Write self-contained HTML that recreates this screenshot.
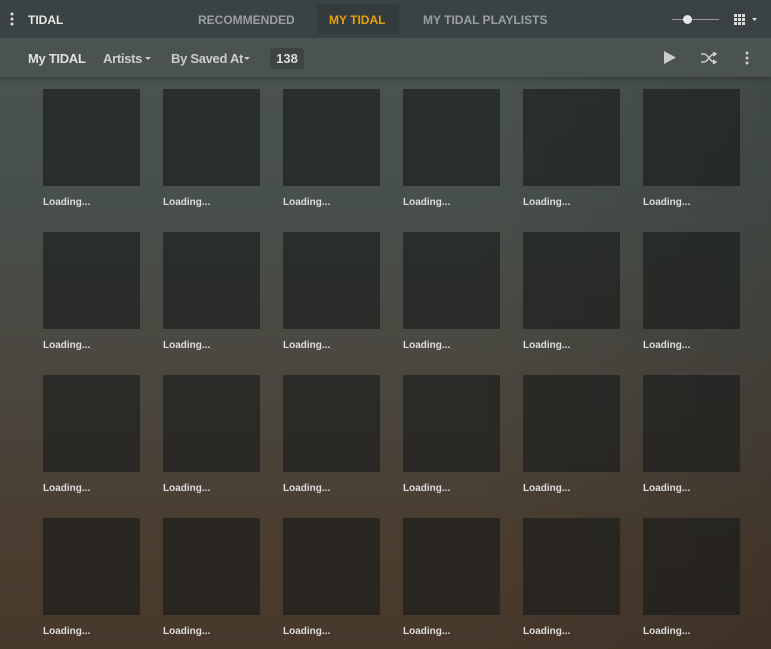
<!DOCTYPE html>
<html><head><style>
body{margin:0;width:771px;height:649px;overflow:hidden;font-family:"Liberation Sans",sans-serif;
background:linear-gradient(180deg,#4b5554 0%,#48504c 30%,#4a463e 60%,#4a3c2f 85%,#46382b 100%);position:relative}
.ov{position:absolute;inset:0;background:linear-gradient(90deg,rgba(0,0,0,0) 60%,rgba(0,0,0,.12) 100%)}
.hdr{position:absolute;left:0;top:0;width:771px;height:38px;background:#3a4243}
.tb{position:absolute;left:0;top:38px;width:771px;height:39px;background:#4a5351;box-shadow:0 2px 4px rgba(0,0,0,.25)}
.t{position:absolute;font-weight:bold;font-size:12px;color:#9aa0a0}
.w{color:#e8e8e8}
.tile{position:absolute;width:97px;height:97px;background:rgba(22,26,26,.62);}
.lb{position:absolute;font-size:10px;font-weight:bold;color:#ddd}
.m{position:absolute;top:51px;font-size:13px;font-weight:bold;letter-spacing:-0.3px}
</style></head><body>
<div class="ov"></div>
<div class="hdr"></div>
<div style="position:absolute;left:317px;top:4px;width:82px;height:30px;background:#333b3c"></div>
<svg style="position:absolute;left:10px;top:12px" width="4" height="14"><circle cx="2" cy="2" r="1.5" fill="#ddd"/><circle cx="2" cy="7" r="1.5" fill="#ddd"/><circle cx="2" cy="12" r="1.5" fill="#ddd"/></svg>
<div class="t w" style="left:28px;top:13px">TIDAL</div>
<div class="t" style="left:198px;top:13px">RECOMMENDED</div>
<div class="t" style="left:329px;top:13px;color:#e5a00d">MY TIDAL</div>
<div class="t" style="left:423px;top:13px">MY TIDAL PLAYLISTS</div>
<div style="position:absolute;left:672px;top:19px;width:47px;height:1px;background:#999"></div>
<div style="position:absolute;left:683px;top:15px;width:9px;height:9px;border-radius:50%;background:#e6e6e6"></div>
<svg style="position:absolute;left:734px;top:14px" width="24" height="12"><g fill="#ddd"><rect x="0" y="0" width="3" height="3"/><rect x="4" y="0" width="3" height="3"/><rect x="8" y="0" width="3" height="3"/><rect x="0" y="4" width="3" height="3"/><rect x="4" y="4" width="3" height="3"/><rect x="8" y="4" width="3" height="3"/><rect x="0" y="8" width="3" height="3"/><rect x="4" y="8" width="3" height="3"/><rect x="8" y="8" width="3" height="3"/><path d="M18 4h5l-2.5 3z"/></g></svg>
<div class="tb"></div>
<div class="m" style="left:28px;color:#e0e0e0">My TIDAL</div>
<div class="m" style="left:103px;color:#ccc">Artists</div>
<svg style="position:absolute;left:145px;top:57px" width="6" height="4"><path d="M0 0h6l-3 3z" fill="#ccc"/></svg>
<div class="m" style="left:171px;color:#ccc">By Saved At</div>
<svg style="position:absolute;left:244px;top:57px" width="6" height="4"><path d="M0 0h6l-3 3z" fill="#ccc"/></svg>
<div style="position:absolute;left:270px;top:48px;width:34px;height:21px;background:#3d4544;border-radius:3px;color:#ddd;font-size:13px;font-weight:bold;text-align:center;line-height:21px">138</div>
<svg style="position:absolute;left:664px;top:51px" width="12" height="13"><path d="M0 0L12 6.5L0 13z" fill="#ccc"/></svg>
<svg style="position:absolute;left:701px;top:52px" width="16" height="12" fill="none" stroke="#ccc" stroke-width="1.5"><path d="M0 2h3c4 0 6 8 10 8h2M0 10h3c4 0 6-8 10-8h2"/><path d="M12 0l3 2-3 2M12 8l3 2-3 2" fill="#ccc"/></svg>
<svg style="position:absolute;left:745px;top:51px" width="4" height="14"><circle cx="2" cy="2" r="1.5" fill="#ccc"/><circle cx="2" cy="7" r="1.5" fill="#ccc"/><circle cx="2" cy="12" r="1.5" fill="#ccc"/></svg>
<div id="g"></div>
<script>
var h='';for(var r=0;r<4;r++)for(var c=0;c<6;c++){var x=43+c*120,y=89+r*143;
h+='<div class="tile" style="left:'+x+'px;top:'+y+'px"></div><div class="lb" style="left:'+x+'px;top:'+(y+108)+'px">Loading...</div>';}
document.getElementById('g').innerHTML=h;
</script>
</body></html>
